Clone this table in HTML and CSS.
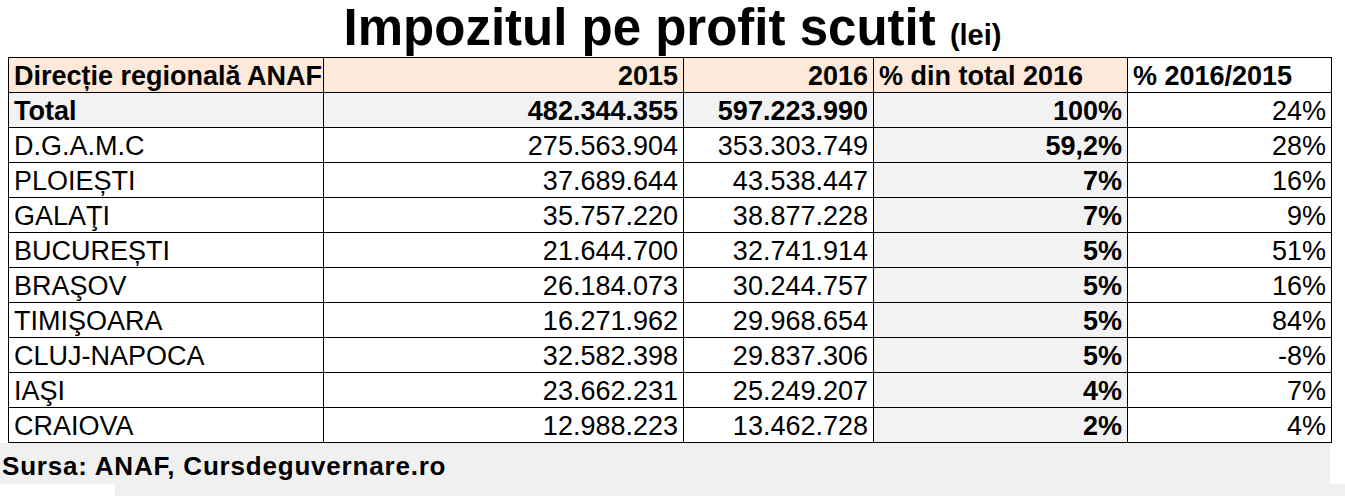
FILE: index.html
```html
<!DOCTYPE html>
<html lang="ro">
<head>
<meta charset="utf-8">
<title>Impozitul pe profit scutit</title>
<link rel="stylesheet" href="styles.css">
</head>
<body>
<div class="page">
  <h1 class="title">Impozitul pe profit scutit <span class="unit">(lei)</span></h1>
  <div class="table-wrap">
    <table class="data">
      <colgroup>
        <col class="c1"><col class="c2"><col class="c3"><col class="c4"><col class="c5">
      </colgroup>
      <thead>
        <tr class="head">
          <th class="left peach">Direcție regională ANAF</th>
          <th class="num peach">2015</th>
          <th class="num peach">2016</th>
          <th class="left peach">% din total 2016</th>
          <th class="left">% 2016/2015</th>
        </tr>
      </thead>
      <tbody>
        <tr class="total">
          <td class="left gray b">Total</td>
          <td class="num gray b">482.344.355</td>
          <td class="num gray b">597.223.990</td>
          <td class="num gray b">100%</td>
          <td class="num">24%</td>
        </tr>
        <tr><td class="left">D.G.A.M.C</td><td class="num">275.563.904</td><td class="num">353.303.749</td><td class="num gray b">59,2%</td><td class="num">28%</td></tr>
        <tr><td class="left">PLOIEȘTI</td><td class="num">37.689.644</td><td class="num">43.538.447</td><td class="num gray b">7%</td><td class="num">16%</td></tr>
        <tr><td class="left">GALAŢI</td><td class="num">35.757.220</td><td class="num">38.877.228</td><td class="num gray b">7%</td><td class="num">9%</td></tr>
        <tr><td class="left">BUCUREȘTI</td><td class="num">21.644.700</td><td class="num">32.741.914</td><td class="num gray b">5%</td><td class="num">51%</td></tr>
        <tr><td class="left">BRAŞOV</td><td class="num">26.184.073</td><td class="num">30.244.757</td><td class="num gray b">5%</td><td class="num">16%</td></tr>
        <tr><td class="left">TIMIŞOARA</td><td class="num">16.271.962</td><td class="num">29.968.654</td><td class="num gray b">5%</td><td class="num">84%</td></tr>
        <tr><td class="left">CLUJ-NAPOCA</td><td class="num">32.582.398</td><td class="num">29.837.306</td><td class="num gray b">5%</td><td class="num">-8%</td></tr>
        <tr><td class="left">IAŞI</td><td class="num">23.662.231</td><td class="num">25.249.207</td><td class="num gray b">4%</td><td class="num">7%</td></tr>
        <tr><td class="left">CRAIOVA</td><td class="num">12.988.223</td><td class="num">13.462.728</td><td class="num gray b">2%</td><td class="num">4%</td></tr>
      </tbody>
    </table>
  </div>
  <div class="source">Sursa: ANAF, Cursdeguvernare.ro</div>
  <div class="bottom-band"><div class="band-white"></div><div class="band-gray"></div></div>
</div>
</body>
</html>
```
FILE: styles.css
```css
html, body {
  margin: 0;
  padding: 0;
  background: #ffffff;
}
.page {
  width: 1345px;
  height: 496px;
  overflow: hidden;
  font-family: "Liberation Sans", Arial, sans-serif;
  color: #000;
}
.title {
  margin: 0;
  height: 57px;
  line-height: 56px;
  font-size: 51px;
  font-weight: bold;
  text-align: center;
  white-space: nowrap;
}
.unit {
  font-size: 29px;
}
.table-wrap {
  padding-left: 8px;
}
.data {
  border-collapse: collapse;
  table-layout: fixed;
  width: 1323px;
}
.c1 { width: 315px; }
.c2 { width: 360px; }
.c3 { width: 190px; }
.c4 { width: 254px; }
.c5 { width: 204px; }
.data th, .data td {
  border: 1px solid #000;
  height: 34px;
  padding: 2px 5px 0 5px;
  box-sizing: border-box;
  font-size: 27px;
  line-height: 32px;
  white-space: nowrap;
  overflow: hidden;
  font-weight: normal;
  background: #ffffff;
}
.data th {
  font-weight: bold;
}
.data .b {
  font-weight: bold;
}
.left { text-align: left; }
.num { text-align: right; }
.data .peach { background: #fde9d9; }
.data .gray { background: #f2f2f2; }
.source {
  width: 1330px;
  height: 41px;
  background: #f0f0f0;
  font-size: 26px;
  font-weight: bold;
  line-height: 46px;
  padding-left: 2px;
  box-sizing: border-box;
  letter-spacing: 0.8px;
  white-space: nowrap;
}
.bottom-band {
  display: flex;
  height: 13px;
}
.band-white {
  width: 115px;
  background: #ffffff;
}
.band-gray {
  flex: 1;
  background: #f0f0f0;
}
```
